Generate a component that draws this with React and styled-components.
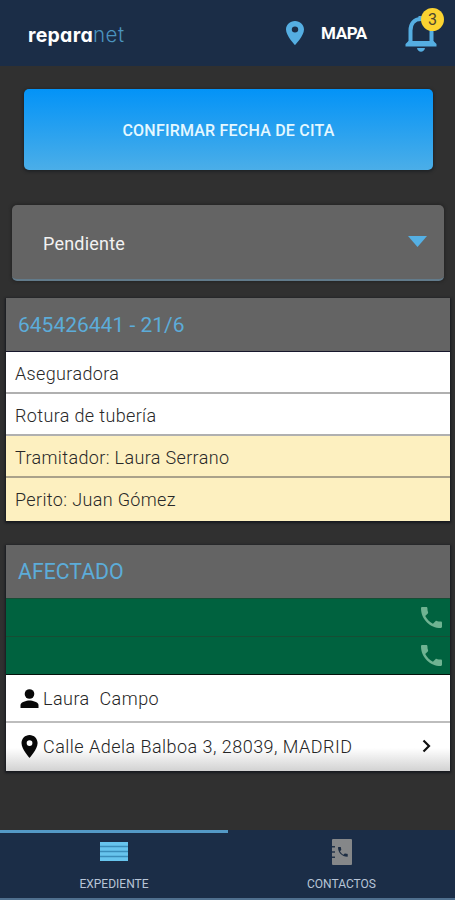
import React from "react";
import styled, { createGlobalStyle } from "styled-components";

const GlobalStyle = createGlobalStyle`
  *, *::before, *::after { box-sizing: border-box; }
  body { margin: 0; background: #303030; font-family: Roboto, sans-serif; }
`;

const Screen = styled.div`
  display: flex;
  flex-direction: column;
  width: 455px;
  height: 900px;
  overflow: hidden;
  background: #303030;
`;

const Header = styled.header`
  display: flex;
  flex: none;
  height: 66px;
  padding: 0 12px 0 28px;
  background: #1b2d47;
`;

const Logo = styled.div`
  width: 258px;
  padding-top: 23px;
  color: #fff;
  font: 700 19.5px/24px Inter, sans-serif;
  font-feature-settings: "cv11";
  letter-spacing: 0.25px;
  white-space: nowrap;
`;

const LogoLight = styled.span`
  color: #4b94bf;
  font-size: 20.5px;
  font-weight: 300;
  letter-spacing: 0.6px;
`;

const MapLink = styled.div`
  display: flex;
  width: 118px;
  padding-top: 20px;
  color: #fff;
  font-size: 17px;
  font-weight: 700;
  line-height: 27px;
  letter-spacing: -0.4px;
  gap: 17px;

  svg { flex: none; margin-top: 1px; }
`;

const Bell = styled.div`
  position: relative;
  width: 39px;
  height: 60px;

  svg { display: block; margin: 12px 0 0 0; }
`;

const Badge = styled.span`
  position: absolute;
  top: 8px;
  left: 17px;
  width: 23px;
  height: 23px;
  border-radius: 50%;
  background: #fbd331;
  color: #4b4530;
  font-size: 16px;
  line-height: 23px;
  text-align: center;
`;

const Main = styled.main`
  display: flex;
  flex: 1;
  flex-direction: column;
  padding: 23px 5px 0 6px;
`;

const ConfirmButton = styled.button`
  height: 81px;
  margin: 0 17px 0 18px;
  border: 0;
  border-radius: 5px;
  background: linear-gradient(#0393f7, #4baee8);
  box-shadow: 0 1px 3px 1px #202326;
  color: #e5f8ff;
  font: 500 16px/24px Roboto, sans-serif;
  letter-spacing: 0.21px;
  padding: 2px 0 0;
`;

const Select = styled.div`
  display: flex;
  align-items: center;
  justify-content: space-between;
  height: 76px;
  margin: 35px 6px 17px;
  padding: 3px 17px 0 31px;
  border-bottom: 2px solid #627b8b;
  border-radius: 5px;
  background: #646464;
  box-shadow: 0 0 3px 1px #242424;
  color: #f2f2f2;
  font-size: 18px;
  letter-spacing: 0.2px;

  svg { margin-top: -5px; }
`;

const Card = styled.section`
  margin-bottom: ${(p) => p.$gap || 0}px;
  box-shadow: 0 1px 2px 1px #17191f;
`;

const CardTitle = styled.h2`
  height: 54px;
  margin: 0;
  padding-left: 12px;
  border-bottom: 1px solid ${(p) => p.$line};
  background: #646464;
  color: #5cacd9;
  font-size: ${(p) => p.$size}px;
  font-weight: 400;
  line-height: 54px;
`;

const InfoRow = styled.div`
  height: ${(p) => (p.$last ? 42.5 : 42)}px;
  padding-left: 9px;
  border-bottom: ${(p) => (p.$last ? 0 : 2)}px solid ${(p) => (p.$note ? "#aaa28a" : "#b0b0b0")};
  background: ${(p) => (p.$note ? "#fdf0c0" : "#fff")};
  color: #282828;
  font-size: 18px;
  font-weight: 300;
  line-height: 44px;
  letter-spacing: 0.36px;
`;

const PhoneRow = styled.div`
  display: flex;
  align-items: center;
  justify-content: flex-end;
  height: 38px;
  padding: 0 8px 0 0;
  border-bottom: 1px solid ${(p) => (p.$last ? "#04120c" : "#174d34")};
  background: #00623f;
`;

const DetailRow = styled.div`
  display: flex;
  align-items: center;
  height: 48px;
  padding: ${(p) => (p.$last ? "0 15px 1px 10px" : "1px 15px 0 10px")};
  border-bottom: ${(p) => (p.$last ? 0 : 2)}px solid #bdbdbd;
  background: ${(p) => (p.$last ? "linear-gradient(#fff 52%, #d2d2d2)" : "#fff")};
  color: #252525;
  font-size: 18px;
  font-weight: 300;
  letter-spacing: 0.47px;
  white-space: pre;

  svg { flex: none; }
`;

const DetailText = styled.span`
  flex: 1;
`;

const TabBar = styled.nav`
  display: flex;
  flex: none;
  height: 70px;
  border-bottom: 2px solid #50708f;
  background: #1b2d47;
`;

const Tab = styled.div`
  display: flex;
  flex-direction: column;
  align-items: center;
  width: ${(p) => (p.$active ? 228 : 227)}px;
  border-top: 3px solid ${(p) => (p.$active ? "#5499c6" : "transparent")};
  color: #b8c5d7;
  font-size: 12px;
  line-height: 16px;
`;

const TabIcon = styled.span`
  display: flex;
  align-items: center;
  justify-content: center;
  height: 37px;
  margin-bottom: 6px;
`;

const PIN = "M12 2C8.13 2 5 5.13 5 9c0 5.25 7 13 7 13s7-7.75 7-13c0-3.87-3.13-7-7-7zm0 9.5a2.5 2.5 0 1 1 0-5 2.5 2.5 0 0 1 0 5z";
const PHONE = "M6.62 10.79c1.44 2.83 3.76 5.14 6.59 6.59l2.2-2.2c.27-.27.67-.36 1.02-.24 1.12.37 2.33.57 3.57.57.55 0 1 .45 1 1V20c0 .55-.45 1-1 1C10.61 21 3 13.39 3 4c0-.55.45-1 1-1h3.5c.55 0 1 .45 1 1 0 1.25.2 2.45.57 3.57.11.35.03.74-.25 1.02l-2.2 2.2z";

const PinIcon = ({ width, height, color }) => (
  <svg width={width} height={height} viewBox="5 2 14 20" preserveAspectRatio="none" fill={color}>
    <path d={PIN} />
  </svg>
);

const PhoneIcon = () => (
  <svg width="21" height="21" viewBox="3 3 18 18" fill="#6fb392">
    <path d={PHONE} />
  </svg>
);

export default function App() {
  return (
    <>
      <GlobalStyle />
      <Screen>
        <Header>
          <Logo>repara<LogoLight>net</LogoLight></Logo>
          <MapLink>
            <PinIcon width={18} height={24} color="#55aee2" />
            MAPA
          </MapLink>
          <Bell>
            <svg width="34" height="42" viewBox="0 0 34 42">
              <path d="M6.5 31V18.5C6.5 12 10 7 17 7s10.500 5 10.500 11.500V31" fill="none" stroke="#55aee2" strokeWidth="4" />
              <path d="M14.500 7V4h5v3z M4.500 29h25l3 3v2.500h-31V32z M13 36h8c-1 5-7 5-8 0z" fill="#55aee2" />
            </svg>
            <Badge>3</Badge>
          </Bell>
        </Header>

        <Main>
          <ConfirmButton>CONFIRMAR FECHA DE CITA</ConfirmButton>
          <Select>
            Pendiente
            <svg width="19" height="11" viewBox="0 0 19 11"><path d="M0 0h19l-9.500 11z" fill="#55b0e4" /></svg>
          </Select>

          <Card $gap={24}>
            <CardTitle $size={21} $line="#17172b">645426441 - 21/6</CardTitle>
            <InfoRow>Aseguradora</InfoRow>
            <InfoRow>Rotura de tubería</InfoRow>
            <InfoRow $note>Tramitador: Laura Serrano</InfoRow>
            <InfoRow $note $last>Perito: Juan Gómez</InfoRow>
          </Card>

          <Card>
            <CardTitle $size={21.3} $line="#174d34">AFECTADO</CardTitle>
            <PhoneRow><PhoneIcon /></PhoneRow>
            <PhoneRow $last><PhoneIcon /></PhoneRow>
            <DetailRow>
              <svg width="27" height="19" viewBox="0 0 27 19">
                <circle cx="13.500" cy="5" r="4.800" fill="#080808" />
                <path d="M4.500 19v-3c0-3 6-4.500 9-4.500s9 1.500 9 4.500v3z" fill="#080808" />
              </svg>
              <DetailText>{"Laura  Campo"}</DetailText>
            </DetailRow>
            <DetailRow $last>
              <svg width="27" height="23" viewBox="0 0 27 23">
                <g transform="translate(5.500 0) scale(1.150) translate(-5 -2)"><path d={PIN} fill="#080808" /></g>
              </svg>
              <DetailText>Calle Adela Balboa 3, 28039, MADRID</DetailText>
              <svg width="17" height="14" viewBox="0 0 17 14" fill="none" stroke="#111" strokeWidth="2.200">
                <path d="M5.500 1.500l5.500 5.500-5.500 5.500" />
              </svg>
            </DetailRow>
          </Card>
        </Main>

        <TabBar>
          <Tab $active>
            <TabIcon>
              <svg width="28" height="19" viewBox="0 0 28 19">
                <path d="M0 0h28v19H0z" fill="#3a8dba" />
                <path d="M0 0h28v3.800H0zM0 5.200h28v3.600H0zM0 10.200h28v3.600H0zM0 15.200h28V19H0z" fill="#67c4ed" />
              </svg>
            </TabIcon>
            EXPEDIENTE
          </Tab>
          <Tab>
            <TabIcon>
              <svg width="20" height="26" viewBox="0 0 20 26">
                <path d="M1 0h18a1 1 0 0 1 1 1v24a1 1 0 0 1-1 1H1a1 1 0 0 1-1-1V1a1 1 0 0 1 1-1z" fill="#858789" />
                <path d="M0 7h3v1.500H0zM0 12.200h3v1.500H0zM0 17.400h3v1.500H0z" fill="#243449" />
                <g transform="translate(6 8) scale(0.540) translate(-3 -3)"><path d={PHONE} fill="#1d2d43" /></g>
              </svg>
            </TabIcon>
            CONTACTOS
          </Tab>
        </TabBar>
      </Screen>
    </>
  );
}
